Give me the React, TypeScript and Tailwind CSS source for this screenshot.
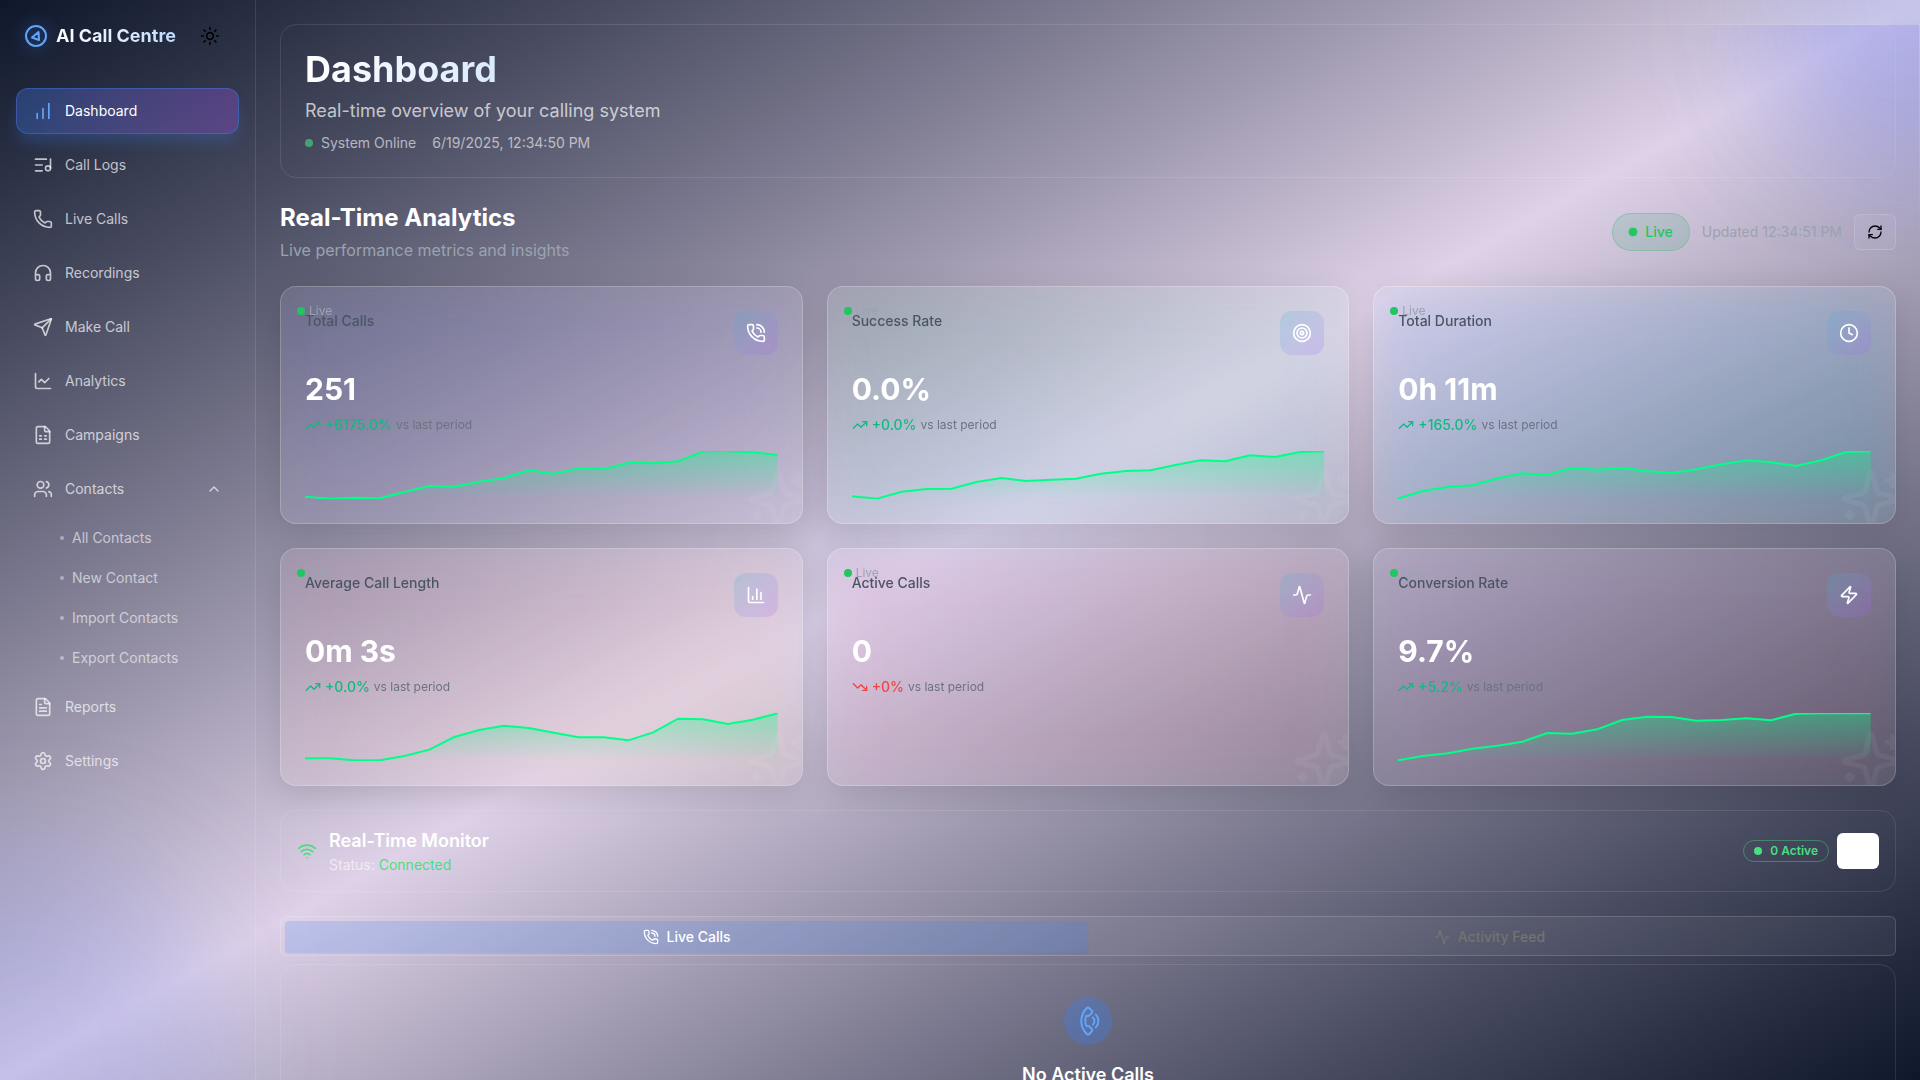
import React from "react";
import {
  Activity,
  ChartColumn,
  ChartLine,
  ChartNoAxesColumnIncreasing,
  ChevronUp,
  Clock,
  FileSpreadsheet,
  FileText,
  Headphones,
  ListMusic,
  Phone,
  PhoneCall,
  RefreshCw,
  Send,
  Settings,
  Sun,
  Target,
  TrendingDown,
  TrendingUp,
  Users,
  Wifi,
  Zap,
  type LucideIcon,
} from "lucide-react";

type NavItem = { label: string; icon: LucideIcon; active?: boolean; children?: string[] };

const nav: NavItem[] = [
  { label: "Dashboard", icon: ChartNoAxesColumnIncreasing, active: true },
  { label: "Call Logs", icon: ListMusic },
  { label: "Live Calls", icon: Phone },
  { label: "Recordings", icon: Headphones },
  { label: "Make Call", icon: Send },
  { label: "Analytics", icon: ChartLine },
  { label: "Campaigns", icon: FileSpreadsheet },
  {
    label: "Contacts",
    icon: Users,
    children: ["All Contacts", "New Contact", "Import Contacts", "Export Contacts"],
  },
  { label: "Reports", icon: FileText },
  { label: "Settings", icon: Settings },
];

type Metric = {
  title: string;
  value: string;
  change: string;
  down?: boolean;
  icon: LucideIcon;
  tint: string;
  points?: number[];
};

// Sparkline heights, in thirds of a pixel below the top of the plot.
const metrics: Metric[] = [
  {
    title: "Total Calls",
    value: "251",
    change: "+6175.0%",
    icon: PhoneCall,
    tint: "from-[#6366f1]/12 to-[#a855f7]/4",
    points: [137, 143, 140, 142, 123, 105, 107, 92, 81, 57, 68, 52, 55, 35, 37, 31, 1, 1, 4, 12],
  },
  {
    title: "Success Rate",
    value: "0.0%",
    change: "+0.0%",
    icon: Target,
    tint: "from-[#22c55e]/8 to-[#06b6d4]/6",
    points: [136, 143, 122, 114, 113, 93, 81, 90, 86, 83, 68, 60, 58, 42, 28, 31, 13, 18, 3, 1],
  },
  {
    title: "Total Duration",
    value: "0h 11m",
    change: "+165.0%",
    icon: Clock,
    tint: "from-[#3b82f6]/12 to-[#06b6d4]/15",
    points: [143, 120, 108, 103, 82, 67, 71, 50, 56, 50, 60, 66, 55, 40, 28, 34, 45, 28, 3, 1],
  },
  {
    title: "Average Call Length",
    value: "0m 3s",
    change: "+0.0%",
    icon: ChartColumn,
    tint: "from-[#ec4899]/8 to-[#fbbf24]/8",
    points: [136, 136, 142, 142, 129, 110, 72, 51, 38, 45, 59, 73, 73, 82, 58, 17, 19, 33, 20, 1],
  },
  {
    title: "Active Calls",
    value: "0",
    change: "+0%",
    down: true,
    icon: Activity,
    tint: "from-[#ec4899]/8 to-[#f43f5e]/8",
  },
  {
    title: "Conversion Rate",
    value: "9.7%",
    change: "+5.2%",
    icon: Zap,
    tint: "from-[#a855f7]/8 to-[#f43f5e]/8",
    points: [142, 129, 121, 107, 98, 86, 60, 62, 49, 21, 11, 12, 23, 21, 16, 22, 2, 1, 1, 1],
  },
];

function Sparkline({ id, points }: { id: string; points: number[] }) {
  const line = points.map((p, i) => `${i * 10},${p}`).join(" ");
  return (
    <svg
      className="block h-full w-full overflow-hidden"
      viewBox="0 0 190 144"
      preserveAspectRatio="none"
      aria-hidden="true"
    >
      <defs>
        <linearGradient id={id} x1="0" y1="0" x2="0" y2="144" gradientUnits="userSpaceOnUse">
          <stop offset="0" stopColor="#00ff88" stopOpacity="0.35" />
          <stop offset="1" stopColor="#00ff88" stopOpacity="0" />
        </linearGradient>
      </defs>
      <polygon points={`0,144 ${line} 190,144`} fill={`url(#${id})`} />
      <polyline
        points={line}
        fill="none"
        stroke="#00ff88"
        strokeWidth="2"
        vectorEffect="non-scaling-stroke"
      />
    </svg>
  );
}

function Sparkles() {
  return (
    <svg
      className="pointer-events-none absolute -right-2 -bottom-2 size-16 text-white opacity-5"
      viewBox="0 0 24 24"
      fill="none"
      stroke="currentColor"
      strokeWidth="2"
      strokeLinecap="round"
      strokeLinejoin="round"
      aria-hidden="true"
    >
      <path d="M9.937 15.5A2 2 0 0 0 8.5 14.063l-6.135-1.582a.5.5 0 0 1 0-.962L8.5 9.936A2 2 0 0 0 9.937 8.5l1.582-6.135a.5.5 0 0 1 .963 0L14.063 8.5A2 2 0 0 0 15.5 9.937l6.135 1.581a.5.5 0 0 1 0 .964L15.5 14.063a2 2 0 0 0-1.437 1.437l-1.582 6.135a.5.5 0 0 1-.963 0z" />
      <path d="M20 3v4" />
      <path d="M22 5h-4" />
      <path d="M4 17v2" />
      <path d="M5 18H3" />
    </svg>
  );
}

function MetricCard({ metric, index }: { metric: Metric; index: number }) {
  const Icon = metric.icon;
  const Trend = metric.down ? TrendingDown : TrendingUp;
  return (
    <article className="relative rounded-2xl border border-white/20 bg-white/10 p-6 shadow-[0_8px_32px_rgba(0,0,0,0.12)] backdrop-blur-xl">
      <div className="pointer-events-none absolute inset-0 overflow-hidden rounded-2xl">
        <div className={`absolute inset-0 bg-linear-to-br blur-xl ${metric.tint}`} />
        <Sparkles />
      </div>
      <div className="absolute top-4 left-4 flex items-center gap-1">
        <span className="size-2 rounded-full bg-[#22c55e]" />
        <span className="text-xs text-[#9ca3af]">Live</span>
      </div>
      <div className="relative mb-4 flex items-start justify-between">
        <h3 className="text-sm font-medium text-[#4b5563]">{metric.title}</h3>
        <div className="rounded-xl bg-linear-to-br from-[#06b6d4]/20 to-[#a855f7]/20 p-3 text-white">
          <Icon size={20} />
        </div>
      </div>
      <p className="relative text-3xl font-bold text-white">{metric.value}</p>
      <div className="relative mt-2 flex items-center gap-1">
        <Trend size={16} className={metric.down ? "text-[#ef4444]" : "text-[#10b981]"} />
        <span
          className={
            metric.down
              ? "text-sm font-medium text-[#ef4444]"
              : "text-sm font-medium text-[#10b981]"
          }
        >
          {metric.change}
        </span>
        <span className="text-xs text-[#6b7280]">vs last period</span>
      </div>
      {metric.points && (
        <div className="relative mt-4 h-12">
          <Sparkline id={`spark-${index}`} points={metric.points} />
        </div>
      )}
    </article>
  );
}

function Sidebar() {
  return (
    <aside className="relative w-64 shrink-0 border-r border-white/10">
      <div className="flex h-[72px] items-center px-6">
        <svg
          className="size-6 text-[#60a5fa] drop-shadow-[0_0_8px_rgba(59,130,246,0.6)]"
          viewBox="0 0 24 24"
          fill="none"
          stroke="currentColor"
          strokeWidth="2"
          strokeLinecap="round"
          strokeLinejoin="round"
          aria-hidden="true"
        >
          <circle cx="12" cy="12" r="10" />
          <path d="M8 13.5 14.5 8l.5 8z" />
        </svg>
        <span className="ml-2 bg-linear-to-r from-white to-[#bfdbfe] bg-clip-text text-lg font-bold text-transparent">
          AI Call Centre
        </span>
        <button type="button" aria-label="Toggle theme" className="ml-6 text-black">
          <Sun size={20} />
        </button>
      </div>
      <nav className="mt-4 px-4" aria-label="Main">
        <ul className="flex flex-col gap-2">
          {nav.map(({ label, icon: Icon, active, children }) => (
            <li key={label}>
              <a
                href="#"
                className={
                  active
                    ? "flex items-center gap-3 rounded-xl border border-[#3b82f6]/40 bg-linear-to-r from-[#3b82f6]/30 to-[#a855f7]/30 px-4 py-3 text-sm text-white shadow-[0_10px_15px_-3px_rgba(59,130,246,0.25)]"
                    : "flex items-center gap-3 rounded-xl border border-transparent px-4 py-3 text-sm text-white/70"
                }
              >
                <Icon size={20} className={active ? "text-[#60a5fa]" : ""} />
                <span>{label}</span>
                {children && <ChevronUp size={16} className="ml-auto" />}
              </a>
              {children && (
                <ul className="mt-2 ml-8 flex flex-col gap-1">
                  {children.map((child) => (
                    <li key={child}>
                      <a
                        href="#"
                        className="flex items-center gap-2 px-3 py-2 text-sm text-white/60"
                      >
                        <span className="size-1 rounded-full bg-white/40" />
                        {child}
                      </a>
                    </li>
                  ))}
                </ul>
              )}
            </li>
          ))}
        </ul>
      </nav>
    </aside>
  );
}

export default function App() {
  return (
    <div className="relative flex h-screen overflow-hidden bg-linear-to-br from-[#0f172a] via-[#dfd2e8] to-[#0f172a] font-['Inter',sans-serif] text-white">
      <div className="pointer-events-none absolute inset-0 overflow-hidden" aria-hidden="true">
        <div className="absolute -top-40 -right-40 size-80 rounded-full bg-[#3b82f6]/15 blur-3xl" />
        <div className="absolute -bottom-40 -left-40 size-96 rounded-full bg-[#4f6ef0]/18 blur-3xl" />
        <div className="absolute top-1/2 left-1/2 size-80 -translate-1/2 rounded-full bg-[#3b82f6]/5 blur-3xl" />
      </div>
      <Sidebar />
      <main className="relative min-w-0 flex-1 overflow-hidden p-6">
        <header className="relative rounded-2xl border border-white/10 p-6">
          <div
            className="pointer-events-none absolute top-0 -right-6 h-56 w-full overflow-hidden"
            aria-hidden="true"
          >
            <div className="absolute -top-32 -right-32 size-72 rounded-full bg-[#6366f1]/18 blur-3xl" />
          </div>
          <h1 className="w-fit bg-linear-to-r from-white to-[#dbeafe] bg-clip-text text-4xl font-bold text-transparent">
            Dashboard
          </h1>
          <p className="mt-2 text-lg text-white/70">Real-time overview of your calling system</p>
          <div className="mt-2 flex items-center gap-4 text-sm text-white/60">
            <span className="flex items-center gap-2">
              <span className="size-2 rounded-full bg-[#4ade80]/60" />
              System Online
            </span>
            <time>6/19/2025, 12:34:50 PM</time>
          </div>
        </header>

        <section className="mt-6">
          <div className="flex items-center justify-between">
            <div>
              <h2 className="text-2xl font-bold">Real-Time Analytics</h2>
              <p className="mt-1 text-[#9ca3af]">Live performance metrics and insights</p>
            </div>
            <div className="flex items-center gap-3">
              <span className="flex items-center gap-2 rounded-full border border-[#22c55e]/30 bg-[#22a06b]/15 px-4 py-2 text-sm font-medium text-[#22c55e]">
                <span className="size-2 rounded-full bg-[#22c55e] ring-1 ring-[#22c55e]/30" />
                Live
              </span>
              <span className="text-sm text-[#9ca3af]">Updated 12:34:51 PM</span>
              <button
                type="button"
                aria-label="Refresh"
                className="flex h-9 items-center rounded-md border border-white/15 bg-white/5 px-3 text-black"
              >
                <RefreshCw size={16} />
              </button>
            </div>
          </div>
          <div className="mt-6 grid grid-cols-3 gap-6">
            {metrics.map((m, i) => (
              <MetricCard key={m.title} metric={m} index={i} />
            ))}
          </div>
        </section>

        <section className="mt-6 flex items-center justify-between rounded-2xl border border-white/10 p-4">
          <div className="flex items-center gap-3">
            <Wifi size={20} className="text-[#4ade80]" />
            <div>
              <h2 className="text-lg font-semibold">Real-Time Monitor</h2>
              <p className="text-sm text-white/60">
                Status: <span className="text-[#4ade80]">Connected</span>
              </p>
            </div>
          </div>
          <div className="flex items-center gap-2">
            <span className="flex items-center gap-2 rounded-full border border-[#4ade80]/40 px-2.5 py-0.5 text-xs font-semibold text-[#4ade80]">
              <span className="size-2 rounded-full bg-[#4ade80]" />0 Active
            </span>
            <button
              type="button"
              aria-label="Monitor options"
              className="h-9 w-[42px] rounded-md bg-white"
            />
          </div>
        </section>

        <div
          role="tablist"
          className="mt-6 grid h-10 grid-cols-2 rounded-md border border-white/15 bg-white/5 p-1 text-sm font-medium"
        >
          <button
            type="button"
            role="tab"
            aria-selected="true"
            className="flex h-8 items-center justify-center gap-2 rounded-sm bg-[#3b82f6]/20 text-white shadow-xs"
          >
            <PhoneCall size={16} />
            Live Calls
          </button>
          <button
            type="button"
            role="tab"
            aria-selected="false"
            className="flex h-8 items-center justify-center gap-2 rounded-sm text-[#737373]"
          >
            <Activity size={16} />
            Activity Feed
          </button>
        </div>

        <section
          role="tabpanel"
          className="mt-2 flex flex-col items-center rounded-2xl border border-white/10 p-8"
        >
          <div className="flex size-12 items-center justify-center rounded-full bg-[#3b82f6]/30 text-[#60a5fa]">
            <PhoneCall size={24} className="rotate-45" />
          </div>
          <h2 className="mt-4 text-lg font-semibold">No Active Calls</h2>
        </section>
      </main>
    </div>
  );
}
